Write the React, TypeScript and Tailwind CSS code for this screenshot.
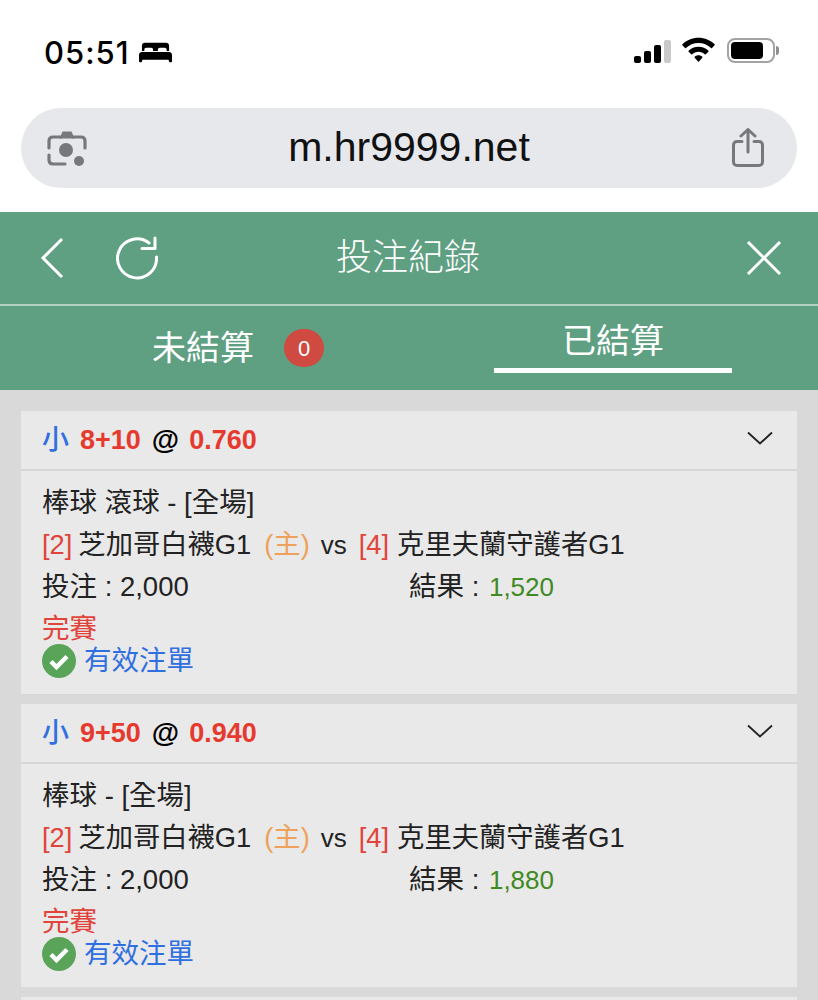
import React from 'react';

const SANS = "font-['Liberation_Sans','Noto_Sans_CJK_TC',sans-serif]";

const BETS = [
  { line: '8+10', odds: '0.760', league: '棒球 滾球 - [全場]', result: '1,520' },
  { line: '9+50', odds: '0.940', league: '棒球 - [全場]', result: '1,880' },
];

function Bed() {
  return (
    <svg width="33" height="22" viewBox="0 0 34 22" fill="#000">
      <path d="M3 9V3.500C3 1.600 4.400.5 6 .5h22c1.600 0 3 1.100 3 3V9h-2.500V7.500c0-1.200-.8-2-2-2h-5c-1.200 0-2 .8-2 2V9h-5V7.500c0-1.200-.8-2-2-2h-5c-1.200 0-2 .8-2 2V9z" />
      <path d="M3 10h28c1.600 0 3 1.200 3 3v6.500c0 .6-.4 1-1 1h-1.200c-.5 0-.8-.3-.9-.8L30.500 18h-27l-.4 1.700c-.1.500-.4.800-.9.800H1c-.6 0-1-.4-1-1V13c0-1.800 1.400-3 3-3z" />
    </svg>
  );
}

function StatusIcons() {
  return (
    <div className="flex items-end">
      <div className="flex items-end gap-[3px]">
        <span className="h-[7px] w-[7px] rounded-[2px] bg-black" />
        <span className="h-[12px] w-[7px] rounded-[2px] bg-black" />
        <span className="h-[18px] w-[7px] rounded-[2px] bg-black" />
        <span className="h-[23px] w-[7px] rounded-[2px] bg-[#c9c9c9]" />
      </div>
      <svg width="33" height="26" viewBox="0 0 34 25" fill="#000" className="ml-[11px]">
        <path d="M17 0c6.400 0 12.300 2.500 16.600 6.700.3.300.3.700 0 1l-2.700 2.800c-.3.300-.7.300-1 0C26.500 7.100 22 5.200 17 5.200S7.500 7.100 4.100 10.500c-.3.300-.7.300-1 0L.4 7.700c-.3-.3-.3-.7 0-1C4.700 2.500 10.600 0 17 0z" />
        <path d="M17 9.200c3.900 0 7.500 1.500 10.200 4 .3.300.3.700 0 1l-2.700 2.800c-.3.300-.7.300-1 0-1.700-1.600-4-2.600-6.500-2.600s-4.800 1-6.500 2.600c-.3.300-.7.300-1 0l-2.700-2.800c-.3-.3-.3-.7 0-1 2.700-2.500 6.300-4 10.200-4z" />
        <path d="M17 18c1.500 0 2.900.6 3.900 1.500.3.300.3.700 0 1l-3.400 3.900c-.3.300-.7.300-1 0l-3.400-3.900c-.3-.3-.3-.7 0-1 1-.9 2.400-1.500 3.900-1.500z" />
      </svg>
      <div className="ml-[12px] flex items-center gap-[1px]">
        <div className="flex h-[25px] w-[48px] items-center rounded-[8px] border-[2.5px] border-[#a3a3a3] p-[2px]">
          <span className="h-full w-[32px] rounded-[4px] bg-black" />
        </div>
        <span className="h-[9px] w-[3px] rounded-r-full bg-[#8f8f8f]" />
      </div>
    </div>
  );
}

function LensIcon() {
  return (
    <svg width="40" height="38" viewBox="0 0 40 38" fill="none" stroke="#77787c" strokeWidth="3.200" strokeLinecap="round">
      <path d="M2 19v-7c0-2.500 1.500-4 4-4h8M26 8h8c2.500 0 4 1.500 4 4v7" />
      <path d="M2 26v5c0 2.500 1.500 4 4 4h12" />
      <path d="M12.500 9.500 15.500 2.500h9l3 7z" fill="#77787c" stroke="none" />
      <circle cx="19" cy="21" r="7" fill="#77787c" stroke="none" />
      <circle cx="32" cy="32" r="5" fill="#77787c" stroke="none" />
    </svg>
  );
}

function ShareIcon() {
  return (
    <svg width="34" height="40" viewBox="0 0 34 40" fill="none" stroke="#77787c" strokeWidth="3" strokeLinecap="round" strokeLinejoin="round">
      <path d="M11 13.500H6c-2 0-3.500 1.500-3.500 3.500v17c0 2 1.500 3.500 3.500 3.500h22c2 0 3.500-1.500 3.500-3.500V17c0-2-1.500-3.500-3.500-3.500h-5" />
      <path d="M17 24V2M10 8l7-6.500L24 8" />
    </svg>
  );
}

function CheckBadge() {
  return (
    <svg width="34" height="34" viewBox="0 0 34 34">
      <circle cx="17" cy="17" r="17" fill="#5aa45a" />
      <path d="M9 17.500 14.500 23 25 12.500" fill="none" stroke="#fff" strokeWidth="4.500" />
    </svg>
  );
}

function BetCard({ line, odds, league, result }: (typeof BETS)[number]) {
  return (
    <div className="bg-[#e9e9e9]">
      <div className="flex h-[60px] items-center justify-between border-b-2 border-[#d6d6d6] pl-[21px] pr-[24px] text-[27px]">
        <div className="font-bold">
          <span className="font-medium text-[#2f6fe0]">小</span>
          <span className="ml-[11px] text-[#e63a2e]">{line}</span>
          <span className="ml-[11px] text-[28px] text-black">@</span>
          <span className="ml-[10px] text-[#e63a2e]">{odds}</span>
        </div>
        <svg width="26" height="14" viewBox="0 0 26 14" fill="none" stroke="#222" strokeWidth="1.800" className="mb-[4px]">
          <path d="M1 1.500 13 12.500 25 1.500" />
        </svg>
      </div>
      <div className="flex h-[223px] flex-col pl-[21px] pt-[11px] text-[27.5px] leading-[42px] text-[#222]">
        <div>{league}</div>
        <div className="flex text-[27.300px]">
          <span className="text-[#e0443a]">[2]</span>
          <span className="ml-[6px]">芝加哥白襪G1</span>
          <span className="ml-[13px] text-[#eda15a]">(主)</span>
          <span className="ml-[11px] text-[26px]">vs</span>
          <span className="ml-[12px] text-[#e0443a]">[4]</span>
          <span className="ml-[8px]">克里夫蘭守護者G1</span>
        </div>
        <div className="flex">
          <span className="w-[367px]">投注 : 2,000</span>
          <span>
            結果 : <span className="ml-[2px] text-[26px] text-[#3f8a24]">{result}</span>
          </span>
        </div>
        <div className="mt-[1px] leading-[40px] text-[#e0443a]">完賽</div>
        <div className="-mt-[5px] flex items-center gap-[8px] text-[#2f6fe0]">
          <CheckBadge />
          <span className="leading-[34px]">有效注單</span>
        </div>
      </div>
    </div>
  );
}

export default function App() {
  return (
    <div className={`h-[1000px] w-[818px] overflow-hidden bg-white ${SANS}`}>
      <div className="flex h-[108px] items-start justify-between pl-[44px] pr-[39px] pt-[37px]">
        <div className="flex items-center gap-[9px]">
          <span className="font-['Inter',sans-serif] text-[31px] font-medium leading-[32px] tracking-[1px] text-black">05:51</span>
          <Bed />
        </div>
        <StatusIcons />
      </div>

      <div className="mx-[21px] flex h-[80px] items-center justify-between rounded-[40px] bg-[#e7e8ec] pl-[26px] pr-[32px]">
        <LensIcon />
        <span className="text-[41px] text-[#111]">m.hr9999.net</span>
        <ShareIcon />
      </div>

      <div className="mt-[24px] bg-[#5fa083]">
        <div className="flex h-[94px] items-center border-b-2 border-[#b5d1c4] pl-[40px] pr-[36px]">
          <div className="flex flex-1 items-center gap-[52px]">
            <svg width="24" height="42" viewBox="0 0 24 42" fill="none" stroke="#fff" strokeWidth="3">
              <path d="M22 2 3 21l19 19" />
            </svg>
            <svg width="42" height="44" viewBox="0 0 42 44" fill="none" stroke="#fff" strokeWidth="3" strokeLinecap="round" strokeLinejoin="round">
              <path d="M33 7A19.500 19.500 0 1 0 40.500 21" />
              <path d="M39 2v10.500H26" />
            </svg>
          </div>
          <span className="mr-[6px] text-[36px] font-light text-white">投注紀錄</span>
          <div className="flex flex-1 justify-end">
            <svg width="36" height="36" viewBox="0 0 36 36" fill="none" stroke="#fff" strokeWidth="3">
              <path d="M2 2l32 32M34 2 2 34" />
            </svg>
          </div>
        </div>
        <div className="flex h-[84px]">
          <div className="flex w-[494px] items-center pl-[152px]">
            <span className="text-[34px] leading-none text-white">未結算</span>
            <span className="ml-[30px] flex h-[38px] w-[40px] items-center justify-center rounded-full bg-[#cf4a40] text-[22px] text-white">
              0
            </span>
          </div>
          <div className="flex h-[67px] w-[238px] items-center justify-center border-b-[5px] border-white pt-[8px] text-[34px] leading-none text-white">
            已結算
          </div>
        </div>
      </div>

      <div className="flex h-[610px] flex-col gap-[10px] bg-[#d9d9d9] px-[21px] pt-[21px]">
        {BETS.map((b) => (
          <BetCard key={b.line} {...b} />
        ))}
        <div className="h-[40px] shrink-0 bg-[#e9e9e9]" />
      </div>
    </div>
  );
}
